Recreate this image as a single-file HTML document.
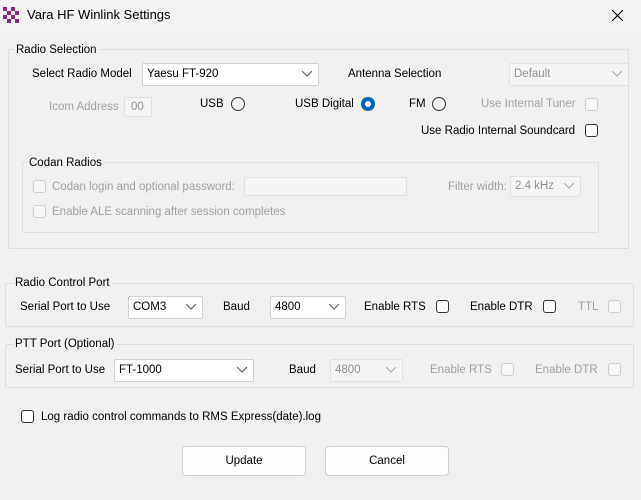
<!DOCTYPE html>
<html><head><meta charset="utf-8"><style>
*{box-sizing:border-box;margin:0;padding:0}
body{width:641px;height:500px;background:#f0f0f0;font-family:"Liberation Sans",sans-serif;font-size:11.5px;color:#000;position:relative;overflow:hidden}
.a{position:absolute;white-space:nowrap;line-height:14px}
.g{color:#a0a0a0}
.grp{position:absolute;border:1px solid #dcdcdc;border-radius:2px}
.lbl{position:absolute;background:#f0f0f0;padding:0 2px;line-height:14px;white-space:nowrap}
.cb{position:absolute;width:13px;height:13px;border:1px solid #333;border-radius:3px;background:#fff}
.cb.d{border-color:#ccc;background:#f7f7f7}
.rb{position:absolute;width:14px;height:14px;border:1px solid #333;border-radius:50%}
.rb.on{border:none;background:#005fb8}
.rb.on::after{content:"";position:absolute;left:4px;top:4px;width:6px;height:6px;border-radius:50%;background:#fff}
.cmb{position:absolute;background:#fff;border:1px solid #d0d0d0;border-radius:2px;padding-left:4px;line-height:20px;white-space:nowrap}
.cmb.d{background:#f5f5f5;border-color:#e0e0e0;color:#909090}
.cmb svg{position:absolute;right:6px;top:7px}
.btn{position:absolute;background:#fdfdfd;border:1px solid #cfcfcf;border-radius:4px;text-align:center;line-height:28px}
</style></head><body>
<div style="position:absolute;left:0;top:0;width:641px;height:31px;background:#f3f3f3"></div>
<svg class="a" style="left:3px;top:7px" width="16" height="16"><rect width="16" height="16" fill="#eee"/><g fill="#8a2a78"><rect x="0" y="0" width="4" height="4"/><rect x="8" y="0" width="4" height="4"/><rect x="4" y="4" width="4" height="4"/><rect x="12" y="4" width="4" height="4"/><rect x="0" y="8" width="4" height="4"/><rect x="8" y="8" width="4" height="4"/><rect x="4" y="12" width="4" height="4"/><rect x="12" y="12" width="4" height="4"/></g></svg>
<div class="a" style="left:27px;top:8px;font-size:13px">Vara HF Winlink Settings</div>
<svg class="a" style="left:612px;top:10px" width="11" height="11"><path d="M0 0L11 11M11 0L0 11" stroke="#000" stroke-width="1.1"/></svg>

<div class="grp" style="left:8px;top:49px;width:621px;height:200px"></div>
<div class="lbl" style="left:14px;top:43px">Radio Selection</div>
<div class="a" style="left:32px;top:67px">Select Radio Model</div>
<div class="cmb" style="left:142px;top:63px;width:177px;height:23px">Yaesu FT-920<svg width="10" height="6"><path d="M0 0L5 5L10 0" fill="none" stroke="#555"/></svg></div>
<div class="a" style="left:348px;top:67px">Antenna Selection</div>
<div class="cmb d" style="left:509px;top:63px;width:120px;height:23px">Default<svg width="10" height="6"><path d="M0 0L5 5L10 0" fill="none" stroke="#aaa"/></svg></div>
<div class="a g" style="left:49px;top:100px">Icom Address</div>
<div class="a" style="left:124px;top:97px;width:28px;height:20px;border:1px solid #e0e0e0;background:#f5f5f5;color:#909090;padding:2px 0 0 6px">00</div>
<div class="a" style="left:200px;top:97px">USB</div>
<div class="rb" style="left:231px;top:97px"></div>
<div class="a" style="left:295px;top:97px">USB Digital</div>
<div class="rb on" style="left:361px;top:97px"></div>
<div class="a" style="left:409px;top:97px">FM</div>
<div class="rb" style="left:432px;top:97px"></div>
<div class="a g" style="left:481px;top:97px">Use Internal Tuner</div>
<div class="cb d" style="left:585px;top:98px"></div>
<div class="a" style="left:421px;top:124px">Use Radio Internal Soundcard</div>
<div class="cb" style="left:585px;top:124px"></div>

<div class="grp" style="left:22px;top:162px;width:577px;height:71px"></div>
<div class="lbl" style="left:27px;top:156px">Codan Radios</div>
<div class="cb d" style="left:33px;top:180px"></div>
<div class="a g" style="left:52px;top:180px">Codan login and optional password:</div>
<div class="a" style="left:244px;top:177px;width:163px;height:19px;border:1px solid #e0e0e0;background:#f5f5f5"></div>
<div class="a g" style="left:448px;top:180px">Filter width:</div>
<div class="cmb d" style="left:510px;top:176px;width:71px;height:21px;line-height:19px">2.4 kHz<svg width="10" height="6" style="top:6px"><path d="M0 0L5 5L10 0" fill="none" stroke="#aaa"/></svg></div>
<div class="cb d" style="left:33px;top:205px"></div>
<div class="a g" style="left:52px;top:205px">Enable ALE scanning after session completes</div>

<div class="grp" style="left:5px;top:283px;width:629px;height:44px"></div>
<div class="lbl" style="left:13px;top:276px">Radio Control Port</div>
<div class="a" style="left:20px;top:300px">Serial Port to Use</div>
<div class="cmb" style="left:128px;top:296px;width:75px;height:23px">COM3<svg width="10" height="6"><path d="M0 0L5 5L10 0" fill="none" stroke="#555"/></svg></div>
<div class="a" style="left:223px;top:300px">Baud</div>
<div class="cmb" style="left:270px;top:296px;width:76px;height:23px">4800<svg width="10" height="6"><path d="M0 0L5 5L10 0" fill="none" stroke="#555"/></svg></div>
<div class="a" style="left:364px;top:300px">Enable RTS</div>
<div class="cb" style="left:436px;top:300px"></div>
<div class="a" style="left:470px;top:300px">Enable DTR</div>
<div class="cb" style="left:543px;top:300px"></div>
<div class="a g" style="left:578px;top:300px">TTL</div>
<div class="cb d" style="left:608px;top:300px"></div>

<div class="grp" style="left:5px;top:344px;width:629px;height:44px"></div>
<div class="lbl" style="left:13px;top:337px">PTT Port (Optional)</div>
<div class="a" style="left:15px;top:363px">Serial Port to Use</div>
<div class="cmb" style="left:114px;top:359px;width:140px;height:23px">FT-1000<svg width="10" height="6"><path d="M0 0L5 5L10 0" fill="none" stroke="#555"/></svg></div>
<div class="a" style="left:289px;top:363px">Baud</div>
<div class="cmb d" style="left:330px;top:359px;width:73px;height:23px">4800<svg width="10" height="6"><path d="M0 0L5 5L10 0" fill="none" stroke="#aaa"/></svg></div>
<div class="a g" style="left:430px;top:363px">Enable RTS</div>
<div class="cb d" style="left:501px;top:363px"></div>
<div class="a g" style="left:535px;top:363px">Enable DTR</div>
<div class="cb d" style="left:608px;top:363px"></div>

<div class="cb" style="left:21px;top:410px"></div>
<div class="a" style="left:41px;top:410px">Log radio control commands to RMS Express(date).log</div>

<div class="btn" style="left:182px;top:446px;width:124px;height:30px">Update</div>
<div class="btn" style="left:325px;top:446px;width:124px;height:30px">Cancel</div>
</body></html>
